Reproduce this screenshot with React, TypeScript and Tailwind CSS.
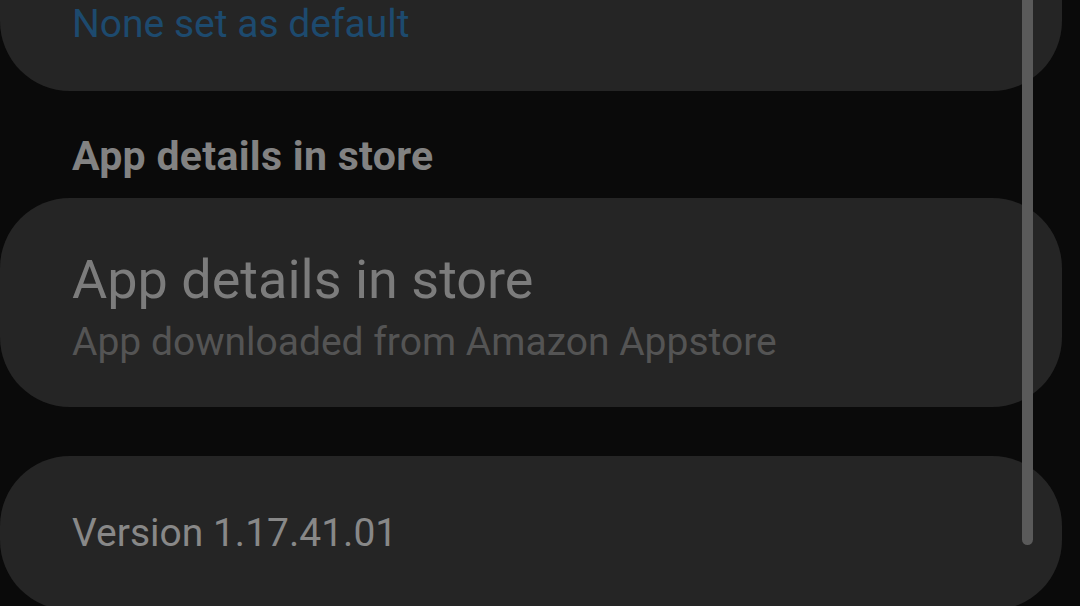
export default function App() {
  return (
    <div
      className="relative h-[606px] w-[1080px] overflow-hidden bg-[#0a0a0a]"
      style={{ fontFamily: 'Roboto, "Noto Sans", sans-serif' }}
    >
      <div className="flex w-[1062px] flex-col">
        {/* Default apps card (cut off at top) */}
        <div className="h-[91px] rounded-b-[70px] bg-[#252525] pl-[72px]">
          <div className="text-[39px] leading-[48px] text-[#1d4a6e]">None set as default</div>
        </div>

        {/* Section header */}
        <div className="h-[107px] pl-[72px] pt-[41px]">
          <div className="text-[41px] font-bold leading-[48px] tracking-[0.3px] text-[#828282]">App details in store</div>
        </div>

        {/* Store card */}
        <div className="flex h-[209px] flex-col rounded-[70px] bg-[#252525] pl-[72px] pt-[51px]">
          <div className="text-[54px] leading-[62px] text-[#7c7c7c]">App details in store</div>
          <div className="mt-[9px] text-[39px] leading-[44px] text-[#545454]">App downloaded from Amazon Appstore</div>
        </div>

        <div className="h-[49px]" />

        {/* Version card */}
        <div className="h-[154px] rounded-[70px] bg-[#252525] pl-[72px] pt-[54px]">
          <div className="text-[39px] leading-[46px] text-[#888888]">Version 1.17.41.01</div>
        </div>
      </div>

      {/* Scrollbar */}
      <div className="absolute right-[47px] top-0 h-[545px] w-[11px] rounded-b-full bg-[#5a5a5a]" />
    </div>
  );
}
